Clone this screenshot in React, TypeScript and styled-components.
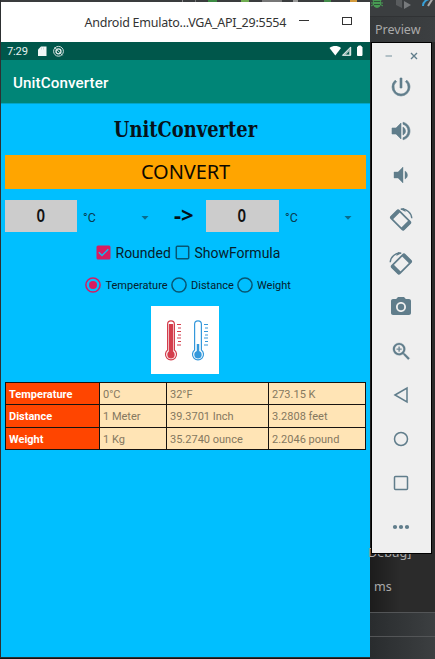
import React from "react";
import styled, { createGlobalStyle } from "styled-components";
import { MdPhotoCamera, MdPowerSettingsNew, MdVolumeDown, MdVolumeUp, MdZoomIn } from "react-icons/md";

const Global = createGlobalStyle`
  * { box-sizing: border-box; }
  html, body { margin: 0; overflow: hidden; background: #2b2b2b; }
  svg { display: block; flex: none; }
`;

const Desktop = styled.div`
  width: 435px;
  height: 659px;
  display: grid;
  grid-template-columns: 370px 65px;
  background: #2b2b2b;
  overflow: hidden;
  font-family: Roboto, "Noto Sans", sans-serif;
`;

const PhoneColumn = styled.div`
  height: 659px;
  padding-left: 1px;
  background: #2d3032;
  border-bottom: 1px solid #111;
`;

const IdeStrip = styled.div`
  height: 2px;
  overflow: hidden;
  display: flex;
  padding-left: 180px;
  background: #3a3c3e;
`;

const Fragment = styled.i<{ $w: number; $gap: number; $color: string }>`
  width: ${(p) => p.$w}px;
  margin-left: ${(p) => p.$gap}px;
  height: 2px;
  background: ${(p) => p.$color};
`;

const TitleBar = styled.header`
  height: 40px;
  background: #fff;
  display: flex;
  align-items: center;
  padding-left: 83.5px;
  color: #333;
`;

const WindowTitle = styled.span`
  width: 214.5px;
  font: 12.5px/20px "Noto Sans", sans-serif;
  letter-spacing: -0.24px;
  white-space: nowrap;
  padding-top: 1px;
`;

const WindowControls = styled.svg`
  margin-top: -4px;
`;

const StatusBar = styled.div`
  height: 18px;
  background: #00574b;
  display: flex;
  align-items: center;
  padding: 0 5px 0 6px;
  color: #e5f1ef;
`;

const Clock = styled.span`
  width: 28px;
  font: 11.2px/18px Roboto, sans-serif;
  letter-spacing: -0.2px;
  padding-top: 1px;
`;

const Spacer = styled.span`
  flex: 1;
`;

const AppBar = styled.div`
  height: 43px;
  background: #008577;
  color: #fff;
  font: 500 15.2px/46px Roboto, sans-serif;
  padding-left: 12px;
  letter-spacing: 0.1px;
`;

const Screen = styled.main`
  height: 554px;
  background: #00bfff;
  border-top: 1px solid #03a5c7;
  padding: 0 4px;
`;

const Heading = styled.h1`
  margin: 0;
  height: 51px;
  padding: 11px 0 0 0;
  color: #071219;
  text-align: center;
  font: bold 22.5px/29px "DejaVu Serif Condensed", "DejaVu Serif", serif;
  font-stretch: condensed;
  white-space: nowrap;
  transform: scaleX(0.885);
`;

const ConvertButton = styled.button`
  display: block;
  width: 361px;
  height: 34px;
  border: 0;
  padding: 0;
  background: #ffa500;
  color: #0d0900;
  font: 20px/34px "Noto Sans", sans-serif;
  letter-spacing: -0.1px;
`;

const InputRow = styled.div`
  display: flex;
  margin-top: 10px;
  height: 33px;
  align-items: center;
`;

const NumberBox = styled.div<{ $w: number }>`
  width: ${(p) => p.$w}px;
  height: 32px;
  background: #ccc;
  color: #111;
  text-align: center;
  font: 600 17px/32px "Noto Sans", sans-serif;
  padding-right: 1px;

  span {
    display: inline-block;
    transform: scaleX(0.88);
  }
`;

const UnitSelect = styled.div<{ $w: number }>`
  width: ${(p) => p.$w}px;
  display: flex;
  align-items: center;
  justify-content: space-between;
  padding: 4px 0 0 6px;
  color: #083a4e;
  font: 12.4px/16px Roboto, sans-serif;
`;

const Arrow = styled.div`
  width: 57px;
  height: 33px;
  padding-left: 25px;
  color: #031119;
  font: bold 22px/30px "Noto Sans", sans-serif;
`;

const Options = styled.div`
  display: flex;
  align-items: center;
  margin-top: 10px;
  height: 20px;
  padding-left: 91px;
  color: #06202b;
  font: 14px/20px Roboto, sans-serif;
`;

const Choices = styled(Options)`
  margin-top: 13px;
  padding-left: 80px;
  font-size: 11px;
`;

const OptionLabel = styled.span<{ $w: number }>`
  width: ${(p) => p.$w}px;
  padding: 1px 0 0 4.500px;
  white-space: nowrap;
`;

const PictureTile = styled.div`
  width: 68px;
  height: 68px;
  margin: 11px 0 0 146px;
  background: #fff;
`;

const Table = styled.div`
  display: grid;
  grid-template-columns: 93px 66px 101px 96px;
  grid-template-rows: repeat(3, 21.4px);
  gap: 1px;
  width: 361px;
  margin-top: 8px;
  padding: 1px;
  background: #17130f;
`;

const Cell = styled.div<{ $head?: boolean }>`
  background: ${(p) => (p.$head ? "#ff4500" : "#ffe4b5")};
  color: ${(p) => (p.$head ? "#fff" : "#85785f")};
  font: ${(p) => (p.$head ? 700 : 400)} 11px/23px Roboto, sans-serif;
  padding-left: 3px;
  white-space: nowrap;
`;

const Side = styled.aside`
  height: 659px;
  display: flex;
  flex-direction: column;
  background: linear-gradient(90deg, #1c1c1c, #2b2b2b 30px);
  color: #aaa;
  font: 12.5px/18px "Noto Sans", sans-serif;
`;

const IdeTools = styled.div`
  height: 16px;
  display: flex;
  background: #3b3e40;
`;

const PreviewTab = styled.div`
  height: 26px;
  flex: none;
  border-top: 1px solid #303234;
  background: linear-gradient(90deg, #35383a, #3c3f41);
  padding: 4px 0 0 5px;
`;

const Toolbar = styled.nav`
  width: 61px;
  height: 512px;
  flex: none;
  margin-left: 1px;
  border: 1px solid #000;
  background: #efefef;
  color: #607d8b;
  position: relative;
  z-index: 1;
`;

const WindowButtons = styled.div`
  height: 22px;
  display: flex;
  align-items: center;
  gap: 17px;
  padding: 3px 0 0 12px;
`;

const ToolButton = styled.div`
  height: 44px;
  display: flex;
  align-items: center;
  justify-content: center;
  padding-right: 1px;

  path[d^="M0 0h24"] {
    stroke: none;
  }
`;

const LogLine = styled.div`
  height: 18px;
  flex: none;
  margin: -10px 0 0 -2px;
`;

const BuildTime = styled.div`
  height: 50px;
  flex: none;
  padding: 16px 0 0 4px;
`;

const IdeFooter = styled.div`
  height: 24px;
  flex: none;
  border-top: 1px solid #535557;
  background: linear-gradient(90deg, #292c2e, #3c3f41);
`;

const Check = ({ on }: { on?: boolean }) => (
  <svg width="15" height="15" viewBox="0 0 15 15">
    {on ? (
      <>
        <rect x="0.5" y="0.5" width="14" height="14" rx="1.5" fill="#d81b60" />
        <path d="M2.8 7.2l3.2 3.3 6.3-6.3" fill="none" stroke="#14b5ee" strokeWidth="1.5" />
      </>
    ) : (
      <rect x="1.3" y="1.3" width="12.4" height="12.4" rx="1" fill="none" stroke="#075673" strokeWidth="1.5" />
    )}
  </svg>
);

const Radio = ({ on }: { on?: boolean }) => (
  <svg width="16" height="16" viewBox="0 0 16 16" fill="none" stroke={on ? "#d81b60" : "#075673"}>
    <circle cx="8" cy="8" r="7.1" strokeWidth="1.5" />
    {on && <circle cx="8" cy="8" r="4" fill="#d81b60" stroke="none" />}
  </svg>
);

const Caret = () => (
  <svg width="8" height="4" viewBox="0 0 8 4">
    <path d="M0.5 0h7L4 3.8z" fill="#096c8d" />
  </svg>
);

const Thermometer = ({ x, color, full }: { x: number; color: string; full?: boolean }) => (
  <g transform={`translate(${x} 0)`} stroke={color} fill="none">
    <path d="M-3.4 44V18.3a3.4 3.4 0 0 1 6.8 0V44a5.5 5.5 0 1 1-6.8 0z" strokeWidth="1.2" />
    <circle cy="48.7" r="3.7" fill={color} stroke="none" />
    <path d={full ? "M0 18v30" : "M0 38v10"} strokeWidth={full ? 4.4 : 2.5} />
    <path d="M6 18.500h4M7 22h3M6 25.500h4M7 29h3M6 32h4M7 35.500h3M6 39h4" strokeWidth="1" />
  </g>
);

const Rotate = ({ flip }: { flip?: boolean }) => (
  <svg width="24" height="24" viewBox="0 0 24 24">
    <g transform={flip ? "matrix(-1 0 0 1 24 0)" : undefined} fill="none" stroke="#607d8b">
      <g transform="translate(11.6 13) rotate(-45)">
        <rect x="-5.5" y="-9" width="11" height="18" rx="1.2" strokeWidth="1.7" />
        <path d="M-5.5-7.6h11M-5.5 7.6h11" strokeWidth="3.4" />
      </g>
      <path d="M12 2.3c5.5-.8 10.5 3.6 10.8 9" strokeWidth="1.4" />
      <path d="M11 2l4-1 1.8 4z" fill="#607d8b" stroke="none" />
    </g>
  </svg>
);

const Outline = ({ children }: { children: React.ReactNode }) => (
  <svg width="18" height="18" viewBox="0 0 18 18" fill="none" stroke="#607d8b" strokeWidth="1.5">
    {children}
  </svg>
);

const tools: React.ReactNode[] = [
  <MdPowerSettingsNew size={24} stroke="#607d8b" strokeWidth={0.6} />,
  <MdVolumeUp size={24} stroke="#607d8b" strokeWidth={0.6} />,
  <MdVolumeDown size={24} stroke="#607d8b" strokeWidth={0.4} />,
  <Rotate />,
  <Rotate flip />,
  <MdPhotoCamera size={24} />,
  <MdZoomIn size={23} stroke="#607d8b" strokeWidth={0.3} />,
  <Outline><path d="M3 9l12-7v14z" /></Outline>,
  <Outline><circle cx="9" cy="9" r="6.5" /></Outline>,
  <Outline><rect x="2.5" y="2.5" width="13" height="13" rx="1" /></Outline>,
  <Outline><path d="M3 9h.01M9 9h.01M15 9h.01" strokeWidth="4.2" strokeLinecap="round" /></Outline>,
];

const rows = [
  ["Temperature", "0°C", "32°F", "273.15 K"],
  ["Distance", "1 Meter", "39.3701 Inch", "3.2808 feet"],
  ["Weight", "1 Kg", "35.2740 ounce", "2.2046 pound"],
];

export default function App() {
  return (
    <>
      <Global />
      <Desktop>
        <PhoneColumn>
          <IdeStrip>
            <Fragment $w={1} $gap={1} $color="#888" />
            <Fragment $w={1} $gap={12} $color="#777" />
            <Fragment $w={9} $gap={12} $color="#3c8b43" />
            <Fragment $w={8} $gap={24} $color="#6fac50" />
            <Fragment $w={20} $gap={13} $color="#777" />
            <Fragment $w={5} $gap={11} $color="#999" />
            <Fragment $w={7} $gap={26} $color="#438c4b" />
            <Fragment $w={7} $gap={19} $color="#d39a3c" />
          </IdeStrip>
          <TitleBar>
            <WindowTitle>Android Emulato...VGA_API_29:5554</WindowTitle>
            <WindowControls width="55" height="12" viewBox="0 0 55 12" fill="none" stroke="#333">
              <path d="M0 6.5h10" />
              <rect x="43.5" y="3.5" width="9" height="7" />
            </WindowControls>
          </TitleBar>
          <StatusBar>
            <Clock>7:29</Clock>
            <svg width="30" height="12" viewBox="0 0 30 12">
              <path d="M3 4.500l3-3h5.500v9.500H3z" fill="#f1f7f6" />
              <path d="M6.500 2.500v2M8.500 2.500v2" stroke="#bcd2ce" strokeWidth=".7" />
              <circle cx="23.500" cy="6.300" r="4.900" fill="none" stroke="#d0dfdc" />
              <circle cx="23.500" cy="6.300" r="2.500" fill="none" stroke="#e5efed" strokeWidth="1.300" />
              <path d="M19.500 2.300l8 8" stroke="#d0dfdc" />
            </svg>
            <Spacer />
            <svg width="36" height="12" viewBox="0 0 36 12">
              <path d="M0.500 3c3.400-2.600 8.100-2.600 11.500 0l-5.700 7.500z" fill="#fff" />
              <path d="M13 10.500l9-9v9z" fill="#9fbdb8" />
              <path d="M13.500 10.300l8.200-8.300v8.300z" fill="none" stroke="#e4efed" />
              <path d="M17 9.500l3-3v3z" fill="#00574b" />
              <path d="M28.500 2h1V1h2.500v1h1v8.500h-4.500z" fill="#fff" stroke="#fff" />
            </svg>
          </StatusBar>
          <AppBar>UnitConverter</AppBar>
          <Screen>
            <Heading>UnitConverter</Heading>
            <ConvertButton>CONVERT</ConvertButton>
            <InputRow>
              <NumberBox $w={72}><span>0</span></NumberBox>
              <UnitSelect $w={72}>°C<Caret /></UnitSelect>
              <Arrow>-&gt;</Arrow>
              <NumberBox $w={73}><span>0</span></NumberBox>
              <UnitSelect $w={73}>°C<Caret /></UnitSelect>
            </InputRow>
            <Options>
              <Check on />
              <OptionLabel $w={64}>Rounded</OptionLabel>
              <Check />
              <OptionLabel $w={100}>ShowFormula</OptionLabel>
            </Options>
            <Choices>
              <Radio on />
              <OptionLabel $w={69.5}>Temperature</OptionLabel>
              <Radio />
              <OptionLabel $w={50}>Distance</OptionLabel>
              <Radio />
              <OptionLabel $w={50}>Weight</OptionLabel>
            </Choices>
            <PictureTile>
              <svg width="68" height="68" viewBox="0 0 68 68">
                <Thermometer x={20} color="#d43d4c" full />
                <Thermometer x={47} color="#3498db" />
              </svg>
            </PictureTile>
            <Table>
              {rows.flatMap((row) =>
                row.map((text, i) => (
                  <Cell key={text} $head={i === 0}>{text}</Cell>
                )),
              )}
            </Table>
          </Screen>
        </PhoneColumn>
        <Side>
          <IdeTools>
            <svg width="65" height="16" viewBox="0 0 65 16">
              <ellipse cx="7" cy="3" rx="4" ry="5" fill="#499c54" />
              <path d="M1-1l12 7M13-1L1 6M1 3h12" stroke="#499c54" />
              <path d="M4 1.5h6M4 4.5h6" stroke="#32513a" />
              <path d="M26 0v5l6 3V0z" fill="#595c5e" />
              <path d="M34 1l7 4-7 4z" fill="#777a7c" />
              <path d="M53 6c0-4 3-6 6-7" fill="none" stroke="#389fd6" strokeWidth="2" />
              <path d="M58 6l5-8" stroke="#aaa" strokeWidth="2" />
            </svg>
          </IdeTools>
          <PreviewTab>Preview</PreviewTab>
          <Toolbar>
            <WindowButtons>
              <svg width="9" height="8" viewBox="0 0 9 8"><path d="M1.500 4H8" stroke="#9eb0b9" strokeWidth="1.5" /></svg>
              <svg width="8" height="8" viewBox="0 0 8 8"><path d="M1 1l6 6M7 1L1 7" stroke="#607d8b" strokeWidth="1.4" /></svg>
            </WindowButtons>
            {tools.map((tool, i) => <ToolButton key={i}>{tool}</ToolButton>)}
          </Toolbar>
          <LogLine>Debug]</LogLine>
          <BuildTime>ms</BuildTime>
          <IdeFooter />
          <IdeFooter />
        </Side>
      </Desktop>
    </>
  );
}
